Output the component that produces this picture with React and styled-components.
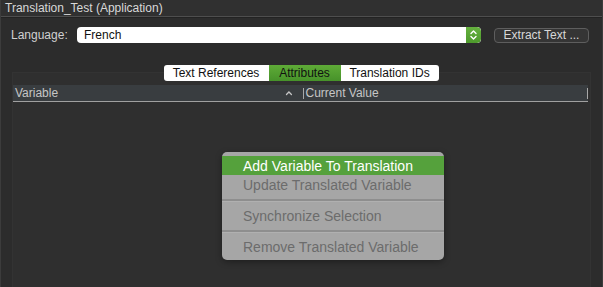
import React from 'react'
import styled, { createGlobalStyle } from 'styled-components'

const Global = createGlobalStyle`
  html, body {
    margin: 0;
    padding: 0;
    background: #2c2c2c;
  }
  body {
    font-family: "Liberation Sans", Arial, sans-serif;
    font-size: 12px;
  }
`

const Window = styled.div`
  position: relative;
  width: 603px;
  height: 287px;
  overflow: hidden;
  background: #2c2c2c;
  border-left: 1px solid #3c3c3c;
  border-right: 1px solid #3c3c3c;
  box-sizing: border-box;
  display: flex;
  flex-direction: column;
`

const TitleBar = styled.div`
  height: 16px;
  padding: 0 4px;
  display: flex;
  align-items: center;
  color: #d8d8d8;
  font-size: 12px;
  background: #303030;
  border-bottom: 1px solid #4e4e4e;
  box-shadow: 0 1px 0 #232323;
`

const LanguageRow = styled.div`
  display: flex;
  align-items: center;
  padding: 10px 13px 0 10px;
  height: 16px;
`

const Label = styled.span`
  color: #d0d0d0;
  width: 66px;
`

const Select = styled.div`
  flex: none;
  width: 404px;
  height: 16px;
  background: #fff;
  border-radius: 4px;
  display: flex;
  align-items: center;
  overflow: hidden;
  color: #111;
`

const SelectText = styled.span`
  flex: 1;
  padding-left: 7px;
`

const Stepper = styled.div`
  width: 15px;
  height: 16px;
  background: linear-gradient(#66b13f, #4e9a2c);
  border-radius: 0 4px 4px 0;
  display: flex;
  align-items: center;
  justify-content: center;
`

const Button = styled.div`
  margin-left: 13px;
  width: 95px;
  height: 15px;
  box-sizing: border-box;
  border: 1px solid #5e5e5e;
  border-radius: 4px;
  background: #353535;
  color: #d8d8d8;
  display: flex;
  align-items: center;
  justify-content: center;
`

const TabsRow = styled.div`
  display: flex;
  justify-content: center;
  margin-top: 22px;
  padding-right: 1px;
  position: relative;
  z-index: 1;
`

const Tab = styled.div`
  height: 16px;
  display: flex;
  align-items: center;
  justify-content: center;
  width: ${p => p.$w}px;
  color: #111;
  background: ${p => (p.$active ? 'linear-gradient(#5fab37, #47922a)' : '#fff')};
  border-radius: ${p => p.$radius};
`

const TableBox = styled.div`
  flex: 1;
  margin: -9px 11px 0 11px;
  background: #2f2f2f;
  border: 1px solid #333;
  border-bottom: none;
  padding-top: 12px;
`

const Header = styled.div`
  height: 16px;
  background: #393d40;
  border-bottom: 1px solid #a0a0a0;
  display: flex;
  align-items: center;
  color: #c6c6c6;
  margin-right: 2px;
`

const Col = styled.div`
  display: flex;
  align-items: center;
  height: 100%;
  width: ${p => p.$w}px;
  padding-left: 2px;
  box-sizing: border-box;
`

const Sep = styled.div`
  width: 1px;
  height: 11px;
  background: #a8a8a8;
`

const Menu = styled.div`
  position: absolute;
  left: 221px;
  top: 152px;
  width: 222px;
  padding: 4px 0 4px;
  background: #a6a6a6;
  border-radius: 5px;
  box-shadow: 0 2px 6px rgba(0, 0, 0, 0.35);
  font-size: 14px;
`

const Item = styled.div`
  height: 19px;
  display: flex;
  align-items: center;
  padding-left: 21px;
  color: ${p => (p.$active ? '#fff' : '#6c6c6c')};
  background: ${p => (p.$active ? '#55a13c' : 'transparent')};
`

const MenuSep = styled.div`
  height: 2px;
  margin: 5px 0 4px;
  background: #8e8e8e;
  border-bottom: 1px solid #b0b0b0;
`

const Arrows = () => (
  <svg width="9" height="12" viewBox="0 0 9 12">
    <path d="M2 4.5 L4.5 2 L7 4.5 M2 7.5 L4.5 10 L7 7.5" fill="none" stroke="#fff" strokeWidth="1.4" strokeLinecap="round" strokeLinejoin="round" />
  </svg>
)

const SortUp = () => (
  <svg width="8" height="6" viewBox="0 0 8 6">
    <path d="M1.5 4.5 L4 2 L6.5 4.5" fill="none" stroke="#c6c6c6" strokeWidth="1.3" strokeLinecap="round" />
  </svg>
)

export default function App() {
  return (
    <Window>
      <Global />
      <TitleBar>Translation_Test (Application)</TitleBar>
      <LanguageRow>
        <Label>Language:</Label>
        <Select>
          <SelectText>French</SelectText>
          <Stepper><Arrows /></Stepper>
        </Select>
        <Button>Extract Text ...</Button>
      </LanguageRow>
      <TabsRow>
        <Tab $w={105} $radius="3px 0 0 3px">Text References</Tab>
        <Tab $w={72} $active $radius="0">Attributes</Tab>
        <Tab $w={98} $radius="0 3px 3px 0">Translation IDs</Tab>
      </TabsRow>
      <TableBox>
        <Header>
          <Col $w={275}>Variable</Col>
          <SortUp />
          <Col $w={10} />
          <Sep />
          <Col $w={287}>Current Value</Col>
          <Sep />
        </Header>
      </TableBox>
      <Menu>
        <Item $active>Add Variable To Translation</Item>
        <Item>Update Translated Variable</Item>
        <MenuSep />
        <Item>Synchronize Selection</Item>
        <MenuSep />
        <Item>Remove Translated Variable</Item>
      </Menu>
    </Window>
  )
}
